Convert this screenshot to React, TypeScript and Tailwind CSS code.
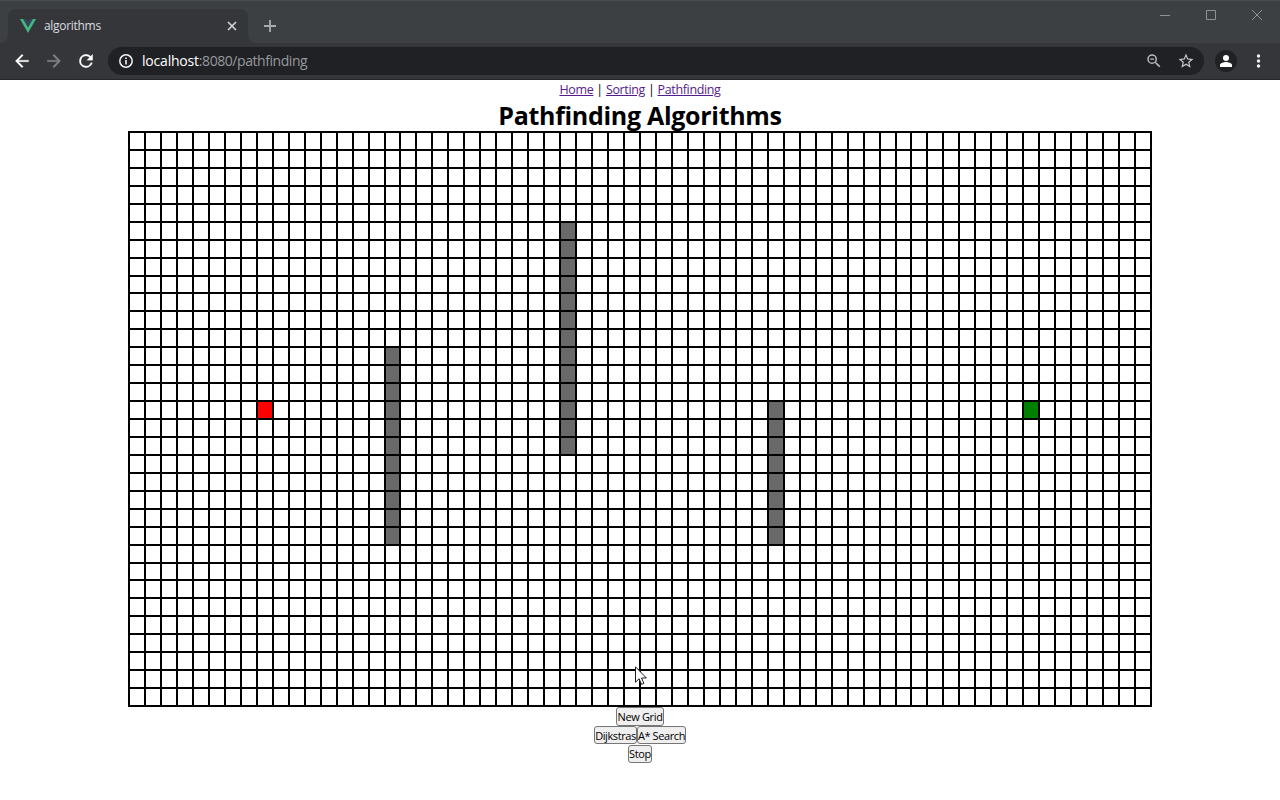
import React from "react";

const COLS = 64;
const ROWS = 32;
const lineX = (k: number) => Math.round(k * 15.96875 + 0.001);
const lineY = (k: number) => Math.round(k * 17.9375 + 0.001);
const tracks = (n: number, at: (k: number) => number) =>
  Array.from({ length: n }, (_, k) => `${at(k + 1) - at(k)}px`).join(" ");

const cellColor = (r: number, c: number) => {
  if (r === 15 && c === 8) return "bg-[#ff0000]";
  if (r === 15 && c === 56) return "bg-[#008000]";
  if (c === 16 && r >= 12 && r <= 22) return "bg-[#696969]";
  if (c === 27 && r >= 5 && r <= 17) return "bg-[#696969]";
  if (c === 40 && r >= 15 && r <= 22) return "bg-[#696969]";
  return "bg-white";
};

function TabBar() {
  return (
    <div className="flex h-[43px] items-end border-t border-[#484c4f] bg-[#3c4043]">
      <div className="flex h-full w-2 items-end bg-[#35363a]">
        <div className="h-full w-full rounded-br-lg bg-[#3c4043]" />
      </div>
      <div className="flex h-[34px] w-60 items-center rounded-t-lg bg-[#35363a] pr-[11px] pl-3">
        <svg className="h-4 w-4 shrink-0" viewBox="0 0 16 16">
          <path d="M0 1h3.2L8 9.3 12.8 1H16L8 14.9z" fill="#41b883" />
          <path d="M3.2 1h3L8 4.1 9.8 1h3L8 9.3z" fill="#35495e" />
        </svg>
        <span className="ml-2 flex-1 text-xs tracking-[-0.3px] text-[#dadce0]">algorithms</span>
        <svg className="h-[10px] w-[10px]" viewBox="0 0 10 10" stroke="#d0d2d5" strokeWidth="1.7">
          <path d="M1 1l8 8M9 1L1 9" />
        </svg>
      </div>
      <div className="flex h-full w-2 items-end bg-[#35363a]">
        <div className="h-full w-full rounded-bl-lg bg-[#3c4043]" />
      </div>
      <svg className="mb-[11px] ml-2 h-3 w-3" viewBox="0 0 12 12" stroke="#a9abad" strokeWidth="1.8">
        <path d="M6 0v12M0 6h12" />
      </svg>
      <div className="flex h-full flex-1 items-start justify-end gap-9 pt-[9px] pr-[18px]">
        <svg className="h-[11px] w-[10px]" viewBox="0 0 10 11" stroke="#8f9193">
          <path d="M0 5.5h10" />
        </svg>
        <svg className="h-[10px] w-[10px]" viewBox="0 0 10 10" fill="none" stroke="#8f9193">
          <path d="M.5 .5h9v9h-9z" />
        </svg>
        <svg className="h-[10px] w-[10px]" viewBox="0 0 10 10" stroke="#8f9193">
          <path d="M0 0l10 10M10 0L0 10" />
        </svg>
      </div>
    </div>
  );
}

function Toolbar() {
  return (
    <div className="flex h-[37px] items-center border-b border-[#252629] bg-[#35363a] pl-3">
      <svg className="h-5 w-5" viewBox="0 0 24 24" fill="#fff" stroke="#fff" strokeWidth=".3">
        <path d="M20 11H7.83l5.59-5.59L12 4l-8 8 8 8 1.41-1.41L7.83 13H20z" />
      </svg>
      <svg className="ml-3 h-5 w-5" viewBox="0 0 24 24" fill="#828386" stroke="#828386" strokeWidth=".3">
        <path d="M12 4l-1.41 1.41L16.17 11H4v2h12.17l-5.58 5.59L12 20l8-8z" />
      </svg>
      <svg className="ml-3 h-5 w-5" viewBox="0 0 24 24" fill="#fff" stroke="#fff" strokeWidth=".3">
        <path d="M17.65 6.35A7.96 7.96 0 0 0 12 4a8 8 0 1 0 7.73 10h-2.08A6 6 0 1 1 12 6c1.66 0 3.14.69 4.22 1.78L13 11h7V4z" />
      </svg>
      <div className="ml-3 flex h-7 w-[1096px] items-center rounded-full bg-[#202124] pr-[9px] pl-[10px]">
        <svg className="h-4 w-4" viewBox="0 0 16 16" fill="none" stroke="#f1f3f4">
          <circle cx="8" cy="8" r="6.2" strokeWidth="1.5" />
          <path d="M8 7v4.4M8 4.4v1.6" strokeWidth="1.6" />
        </svg>
        <span className="ml-2 flex-1 text-sm tracking-[-0.44px] text-[#96999d]">
          <span className="tracking-[-0.2px] text-white">localhost</span>:8080/pathfinding
        </span>
        <svg className="h-[18px] w-[18px]" viewBox="0 0 24 24" fill="#b9bbbe">
          <path d="M15.5 14h-.79l-.28-.27A6.47 6.47 0 0 0 16 9.5 6.5 6.5 0 1 0 9.5 16c1.61 0 3.09-.59 4.23-1.57l.27.28v.79l5 4.99L20.49 19zm-6 0a4.5 4.5 0 1 1 0-9 4.5 4.5 0 0 1 0 9zM7 8.7h5v1.6H7z" />
        </svg>
        <svg className="ml-[14px] h-[18px] w-[18px]" viewBox="0 0 24 24" fill="#c4c6c9">
          <path d="M22 9.24l-7.19-.62L12 2 9.19 8.63 2 9.24l5.46 4.73L5.82 21 12 17.27 18.18 21l-1.63-7.03zM12 15.4l-3.76 2.27 1-4.28-3.32-2.88 4.38-.38L12 6.1l1.71 4.04 4.38.38-3.32 2.88 1 4.28z" />
        </svg>
      </div>
      <div className="ml-[11px] flex h-[22px] w-[22px] items-center justify-center rounded-full bg-[#202124]">
        <svg className="h-[14px] w-[14px]" viewBox="0 0 14 14" fill="#fff">
          <circle cx="7" cy="4" r="3" />
          <path d="M1 13v-2c0-2 4-3 6-3s6 1 6 3v2z" />
        </svg>
      </div>
      <svg className="ml-[19px] h-4 w-5" viewBox="0 0 20 16" fill="#f1f3f4">
        <circle cx="2.5" cy="3" r="1.7" />
        <circle cx="2.5" cy="8" r="1.7" />
        <circle cx="2.5" cy="13" r="1.7" />
      </svg>
    </div>
  );
}

function Grid() {
  return (
    <div
      className="grid border-r-2 border-b-2 border-black"
      style={{ gridTemplateColumns: tracks(COLS, lineX), gridTemplateRows: tracks(ROWS, lineY) }}
    >
      {Array.from({ length: ROWS * COLS }, (_, i) => (
        <div
          key={i}
          className={`border-t-2 border-l-2 border-black ${cellColor(Math.floor(i / COLS), i % COLS)}`}
        />
      ))}
    </div>
  );
}

const btn =
  "flex items-center justify-center rounded-[3px] border border-[#767676] bg-[#efefef] text-[11px] leading-none whitespace-nowrap text-black";

export default function App() {
  return (
    <div className="h-[800px] w-[1280px] overflow-hidden bg-white font-['Open_Sans','Noto_Sans',sans-serif]">
      <TabBar />
      <Toolbar />
      <main className="relative flex flex-col items-center">
        <nav className="flex h-5 items-center gap-[3px] text-[12.5px] tracking-[-0.35px] text-black">
          <a className="text-[#551a8b] underline">Home</a>
          <span>|</span>
          <a className="text-[#551a8b] underline">Sorting</a>
          <span>|</span>
          <a className="text-[#551a8b] underline">Pathfinding</a>
        </nav>
        <h1 className="h-[31px] text-[25px] leading-[31px] font-bold tracking-[-0.3px] whitespace-nowrap text-black">
          Pathfinding Algorithms
        </h1>
        <Grid />
        <button className={`${btn} h-[19px] w-12 tracking-[-0.35px]`}>New Grid</button>
        <div className="flex">
          <button className={`${btn} h-[18px] w-[43px] tracking-[-0.4px]`}>Dijkstras</button>
          <button className={`${btn} h-[18px] w-[49px] tracking-[-0.4px]`}>A* Search</button>
        </div>
        <button className={`${btn} mt-px h-[18px] w-6 pb-px tracking-[-0.3px]`}>Stop</button>
        <svg className="absolute top-[586px] left-[635px] h-[20px] w-[13px]" viewBox="0 0 13 20">
          <path
            d="M.5 .8v15.4l3.6-3.4 2.5 5.6 2.3-1-2.4-5.4h4.9z"
            fill="#fff"
            stroke="#1c1c28"
            strokeWidth="1"
          />
        </svg>
      </main>
    </div>
  );
}
